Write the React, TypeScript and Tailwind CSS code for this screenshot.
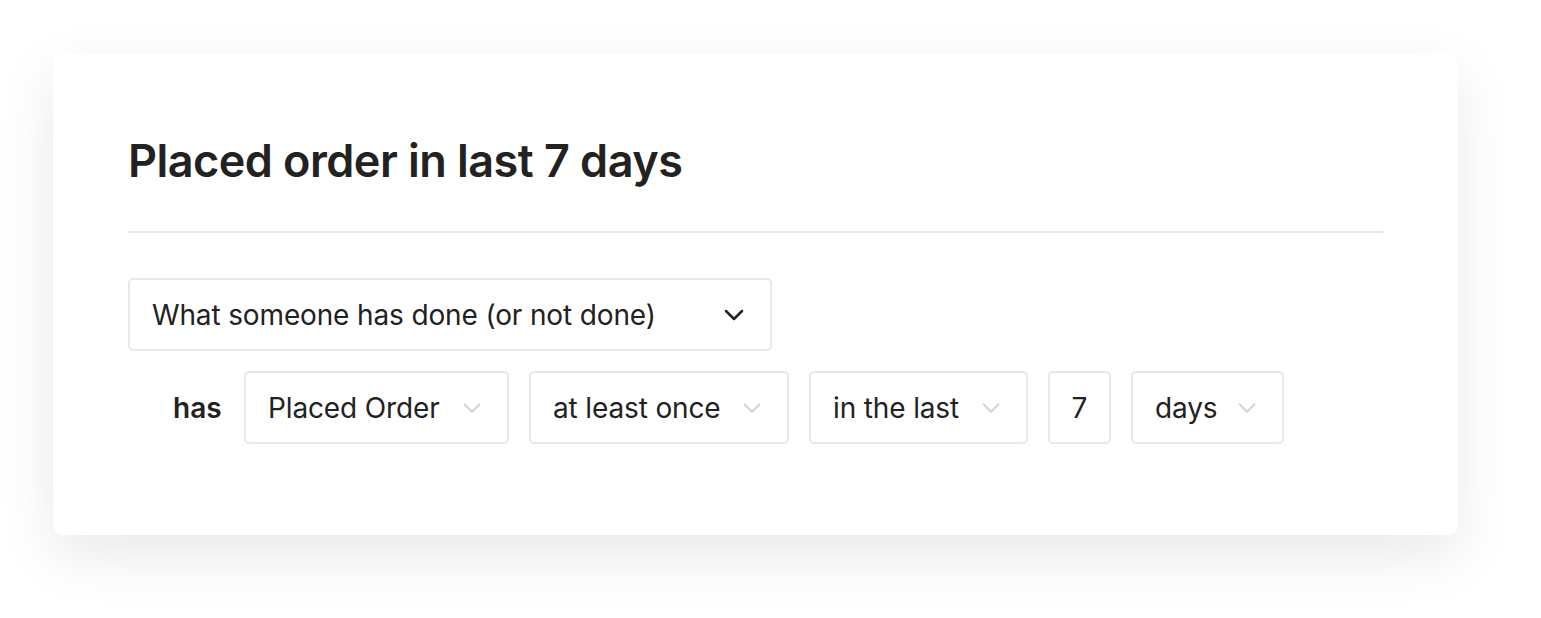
import { ChevronDown } from "lucide-react";

function Select({ label, width, dark = false }: { label: string; width: string; dark?: boolean }) {
  return (
    <div
      className={`flex items-center justify-between h-[73px] rounded-[5px] border-2 border-[#e8e8e8] bg-white pl-[22px] pr-[20px] ${width}`}
    >
      <span className="text-[28px] text-[#222] leading-none tracking-[-0.005em]">{label}</span>
      <ChevronDown
        className={dark ? "w-[32px] h-[32px] text-[#222]" : "w-[30px] h-[30px] text-[#d2d2d2]"}
        strokeWidth={dark ? 1.9 : 1.5}
      />
    </div>
  );
}

export default function App() {
  return (
    <div className="w-[1541px] h-[618px] bg-white pt-[53px] pl-[53px] font-['Inter',sans-serif]">
      <div className="w-[1405px] h-[482px] rounded-[10px] bg-white shadow-[0_20px_60px_rgba(0,0,0,0.09)] px-[75px] pt-[95px]">
        <h1 className="text-[45px] font-semibold leading-none tracking-[-0.012em] text-[#222] -mt-[10px]">
          Placed order in last 7 days
        </h1>
        <div className="mt-[48px] h-[2px] bg-[#e8e8e8]" />
        <div className="mt-[45px]">
          <Select label="What someone has done (or not done)" width="w-[644px]" dark />
        </div>
        <div className="mt-[20px] flex items-center">
          <span className="ml-[45px] w-[71px] text-[28px] font-semibold text-[#222]">has</span>
          <div className="flex items-center gap-[20px]">
            <Select label="Placed Order" width="w-[265px]" />
            <Select label="at least once" width="w-[260px]" />
            <Select label="in the last" width="w-[219px]" />
            <div className="flex items-center justify-center h-[73px] w-[63px] rounded-[5px] border-2 border-[#e8e8e8] text-[28px] text-[#222]">
              7
            </div>
            <Select label="days" width="w-[153px]" />
          </div>
        </div>
      </div>
    </div>
  );
}
